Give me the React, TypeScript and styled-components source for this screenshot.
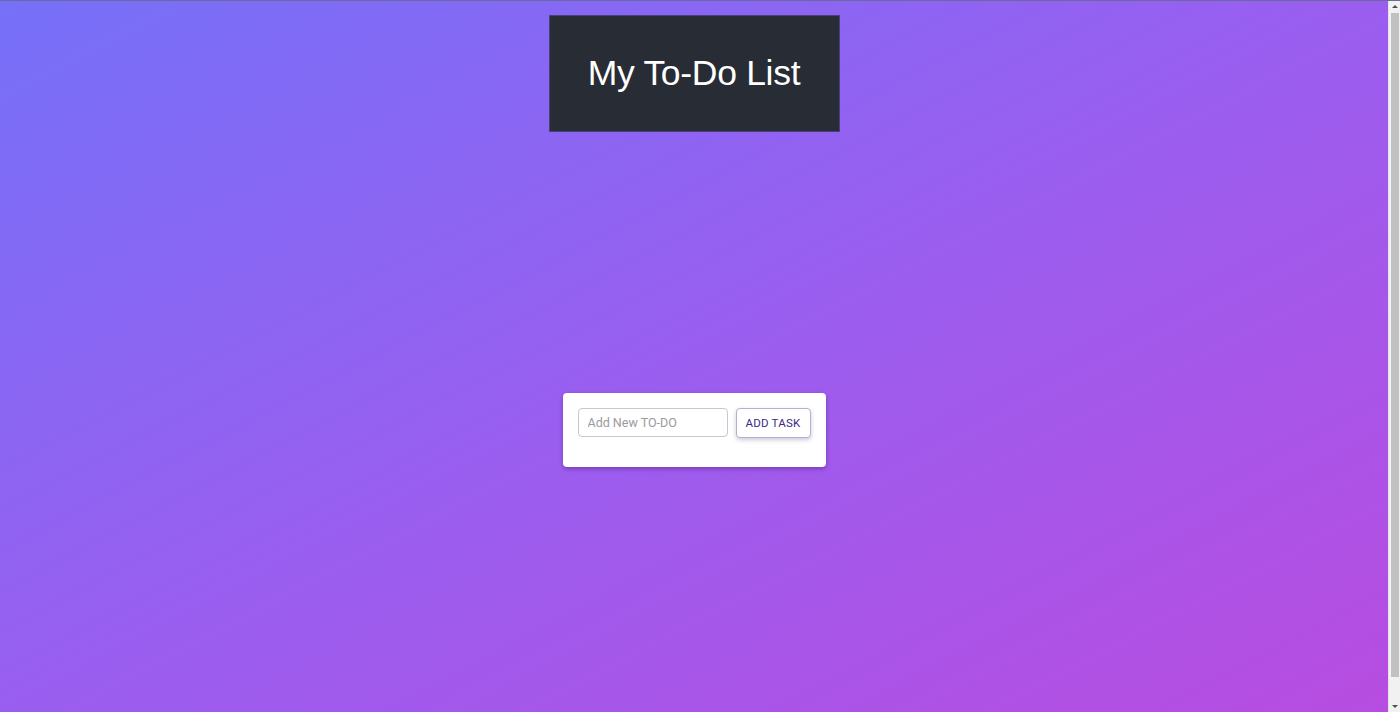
import React from "react";
import styled, { createGlobalStyle } from "styled-components";

const GlobalStyle = createGlobalStyle`
  html, body {
    margin: 0;
    padding: 0;
    height: 100%;
    overflow: hidden;
  }
  body {
    font-family: "Liberation Sans", Arial, sans-serif;
  }
  #root {
    height: 100%;
  }
`;

const Window = styled.div`
  display: flex;
  height: 100vh;
  border-top: 1px solid #6a6a9a;
  box-sizing: border-box;
`;

const Viewport = styled.div`
  flex: 1;
  overflow: hidden;
`;

const Page = styled.div`
  height: calc(100vh + 15px);
  display: flex;
  flex-direction: column;
  align-items: center;
  background: linear-gradient(to bottom right, #7670f8 0%, #9a5eef 50%, #b84ce0 100%);
  box-sizing: border-box;
  padding-top: 14px;
`;

const ScrollBar = styled.div`
  width: 12px;
  background: #f1f1f1;
  display: flex;
  flex-direction: column;
  align-items: center;
  border-left: 1px solid #e4e4e4;
  box-sizing: border-box;
`;

const Arrow = styled.div<{ $dir: "up" | "down" }>`
  height: 11px;
  width: 100%;
  display: flex;
  align-items: center;
  justify-content: center;
  &::before {
    content: "";
    width: 0;
    height: 0;
    border-left: 3px solid transparent;
    border-right: 3px solid transparent;
    ${(p) =>
      p.$dir === "up"
        ? "border-bottom: 3px solid #505050;"
        : "border-top: 3px solid #505050;"}
  }
`;

const Thumb = styled.div`
  width: 8px;
  height: 664px;
  background: #c1c1c1;
  margin-top: 1px;
`;

const Spacer = styled.div`
  flex: 1;
`;

const Header = styled.header`
  background: #282c34;
  color: #ffffff;
  width: 291px;
  height: 117px;
  box-sizing: border-box;
  display: flex;
  align-items: center;
  justify-content: center;
  border: 1px solid #4a3f7a;
`;

const Title = styled.h1`
  margin: 0;
  font-family: "Liberation Sans", Arial, sans-serif;
  font-weight: 400;
  font-size: 35.5px;
  letter-spacing: -0.3px;
`;

const Main = styled.main`
  flex: 1;
  display: flex;
  align-items: center;
  justify-content: center;
  width: 100%;
`;

const Card = styled.div`
  background: #ffffff;
  border-radius: 4px;
  box-shadow: 0 2px 4px rgba(40, 10, 80, 0.35);
  width: 263px;
  height: 74px;
  box-sizing: border-box;
  padding: 15px;
  display: flex;
  align-items: flex-start;
  gap: 8px;
`;

const Input = styled.input`
  width: 150px;
  height: 29px;
  box-sizing: border-box;
  border: 1px solid #c8c8cc;
  border-radius: 4px;
  padding: 0 9px;
  font-family: Roboto, "Liberation Sans", sans-serif;
  font-size: 12.5px;
  color: #333;
  outline: none;
  &::placeholder {
    color: #9a9a9e;
  }
`;

const Button = styled.button`
  width: 75px;
  height: 30px;
  box-sizing: border-box;
  background: #ffffff;
  border: 1px solid #b5b0cf;
  border-radius: 4px;
  box-shadow: 0 2px 4px rgba(60, 40, 110, 0.25);
  color: #3b2a82;
  font-family: Roboto, "Liberation Sans", sans-serif;
  font-size: 11.5px;
  font-weight: 400;
  letter-spacing: 0.2px;
  cursor: pointer;
  padding: 0;
`;

export default function App() {
  return (
    <>
      <GlobalStyle />
      <Window>
        <Viewport>
          <Page>
            <Header>
              <Title>My To-Do List</Title>
            </Header>
            <Main>
              <Card>
                <Input placeholder="Add New TO-DO" />
                <Button>ADD TASK</Button>
              </Card>
            </Main>
          </Page>
        </Viewport>
        <ScrollBar>
          <Arrow $dir="up" />
          <Thumb />
          <Spacer />
          <Arrow $dir="down" />
        </ScrollBar>
      </Window>
    </>
  );
}
